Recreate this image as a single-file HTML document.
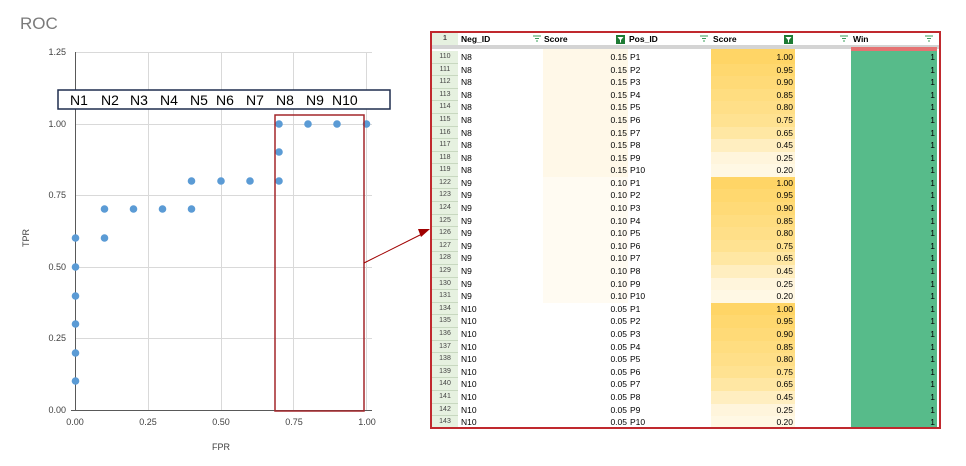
<!DOCTYPE html>
<html><head><meta charset="utf-8"><style>
*{margin:0;padding:0;box-sizing:border-box}
body{width:966px;height:466px;background:#fff;position:relative;overflow:hidden;font-family:"Liberation Sans",sans-serif}
.t{position:absolute;font-family:"Liberation Sans",sans-serif}
#tbl{position:absolute;left:430px;top:31px;width:511px;height:398px;border:2px solid #c0292e;background:#fff;overflow:hidden}
.hd{position:absolute;left:0;top:0;height:13px;width:100%;font-size:8.5px;font-weight:bold;color:#000}
.row{position:absolute;left:0;height:12.59px;width:100%;font-size:8.5px;color:#000;line-height:12.5px}
.c{position:absolute;top:0;height:100%;white-space:nowrap}
.rn{left:0;width:26px;background:#e6f1e0;color:#444;font-size:7px;text-align:center;border-bottom:1px solid #c8d8c0}
.neg{left:27px;width:83px;padding-left:2px}
.s1{left:111px;width:85px;text-align:right;padding-right:1px}
.pos{left:196px;width:82px;padding-left:2px}
.s2{left:279px;width:84px;text-align:right;padding-right:2px}
.win{left:419px;width:86px;background:#57bb8a;text-align:right;padding-right:2px}
.f{position:absolute;top:3px;width:8px;height:7px}
.fg{position:absolute;top:2px;width:9px;height:9px}
</style></head><body>
<div class="t" style="left:20px;top:14px;font-size:17px;color:#7a7a7a">ROC</div>
<svg width="430" height="466" style="position:absolute;left:0;top:0">
<g stroke="#d9d9d9" stroke-width="1">
<line x1="75" y1="52.5" x2="372" y2="52.5"/><line x1="75" y1="124.5" x2="372" y2="124.5"/><line x1="75" y1="195.5" x2="372" y2="195.5"/><line x1="75" y1="267.5" x2="372" y2="267.5"/><line x1="75" y1="338.5" x2="372" y2="338.5"/>
<line x1="148.5" y1="52" x2="148.5" y2="410"/><line x1="221.5" y1="52" x2="221.5" y2="410"/><line x1="293.5" y1="52" x2="293.5" y2="410"/><line x1="366.5" y1="52" x2="366.5" y2="410"/>
</g>
<line x1="75.5" y1="52" x2="75.5" y2="411" stroke="#595959"/>
<line x1="71" y1="410.5" x2="372" y2="410.5" stroke="#595959"/>
<g font-size="9" fill="#404040" font-family="Liberation Sans" text-anchor="end">
<text x="66" y="55">1.25</text><text x="66" y="127">1.00</text><text x="66" y="198">0.75</text><text x="66" y="270">0.50</text><text x="66" y="341">0.25</text><text x="66" y="413">0.00</text></g>
<g font-size="9" fill="#404040" font-family="Liberation Sans" text-anchor="middle">
<text x="75" y="425">0.00</text><text x="148" y="425">0.25</text><text x="221" y="425">0.50</text><text x="294" y="425">0.75</text><text x="367" y="425">1.00</text>
<text x="221" y="450">FPR</text>
<text x="0" y="0" transform="translate(29,238) rotate(-90)">TPR</text></g>
<g fill="#5b9bd5">
<circle cx="75.5" cy="381" r="3.8"/><circle cx="75.5" cy="353" r="3.8"/><circle cx="75.5" cy="324" r="3.8"/><circle cx="75.5" cy="296" r="3.8"/><circle cx="75.5" cy="267" r="3.8"/><circle cx="75.5" cy="238" r="3.8"/>
<circle cx="104.5" cy="238" r="3.8"/><circle cx="104.5" cy="209" r="3.8"/><circle cx="133.5" cy="209" r="3.8"/><circle cx="162.5" cy="209" r="3.8"/><circle cx="191.5" cy="209" r="3.8"/>
<circle cx="191.5" cy="181" r="3.8"/><circle cx="221" cy="181" r="3.8"/><circle cx="250" cy="181" r="3.8"/><circle cx="279" cy="181" r="3.8"/><circle cx="279" cy="152" r="3.8"/>
<circle cx="279" cy="124" r="3.8"/><circle cx="308" cy="124" r="3.8"/><circle cx="337" cy="124" r="3.8"/><circle cx="366.5" cy="124" r="3.8"/></g>
<rect x="58" y="90" width="332" height="19" fill="#fff" stroke="#1f2d4e" stroke-width="1.5"/>
<g font-size="14" fill="#000" font-family="Liberation Sans"><text x="70" y="105">N1</text><text x="101" y="105">N2</text><text x="130" y="105">N3</text><text x="160" y="105">N4</text><text x="190" y="105">N5</text><text x="216" y="105">N6</text><text x="246" y="105">N7</text><text x="276" y="105">N8</text><text x="306" y="105">N9</text><text x="332" y="105">N10</text></g>
<rect x="275" y="115" width="89" height="296" fill="none" stroke="#a3262a" stroke-width="1.5"/>
<line x1="364" y1="263" x2="422" y2="234" stroke="#a00000" stroke-width="1"/>
<polygon points="430,229 418,229 421,237" fill="#a00000"/>
</svg>
<div id="tbl">
<div class="hd">
<div class="c rn" style="height:13px;line-height:12px;border:0">1</div>
<div class="c neg" style="line-height:12px">Neg_ID</div>
<svg class="f" style="left:101px;top:2px" viewBox="0 0 8 7"><path d="M0 1h8M2 3.5h4M3 6h2" stroke="#3a9c5a" stroke-width="1"/></svg>
<div class="c" style="left:112px;line-height:12px">Score</div>
<svg class="fg" style="left:184px" viewBox="0 0 9 9"><rect width="9" height="9" fill="#1e7b34"/><path d="M1.5 2h6L5 5v2.5H4V5z" fill="#fff"/></svg>
<div class="c" style="left:197px;line-height:12px">Pos_ID</div>
<svg class="f" style="left:268px;top:2px" viewBox="0 0 8 7"><path d="M0 1h8M2 3.5h4M3 6h2" stroke="#3a9c5a" stroke-width="1"/></svg>
<div class="c" style="left:281px;line-height:12px">Score</div>
<svg class="fg" style="left:352px" viewBox="0 0 9 9"><rect width="9" height="9" fill="#1e7b34"/><path d="M1.5 2h6L5 5v2.5H4V5z" fill="#fff"/></svg>
<svg class="f" style="left:408px;top:2px" viewBox="0 0 8 7"><path d="M0 1h8M2 3.5h4M3 6h2" stroke="#3a9c5a" stroke-width="1"/></svg>
<div class="c" style="left:421px;line-height:12px">Win</div>
<svg class="f" style="left:493px;top:2px" viewBox="0 0 8 7"><path d="M0 1h8M2 3.5h4M3 6h2" stroke="#3a9c5a" stroke-width="1"/></svg>
</div>
<div style="position:absolute;left:0;top:12px;width:100%;height:4px;background:#d4d4d4"></div>
<div style="position:absolute;left:111px;top:16px;width:85px;height:2px;background:#fff8e8"></div>
<div style="position:absolute;left:279px;top:16px;width:84px;height:2px;background:#ffd566"></div>
<div style="position:absolute;left:419px;top:14px;width:86px;height:4px;background:#e57373"></div>
<div id="rows"></div>
</div>
<script>
var P=[["1.00","#ffd566"],["0.95","#ffd86f"],["0.90","#ffda77"],["0.85","#ffdd80"],["0.80","#ffdf88"],["0.75","#ffe291"],["0.65","#ffe7a3"],["0.45","#ffeec0"],["0.25","#fff5dc"],["0.20","#fff8e4"]];
var G=[["N8","0.15",110,"#fff8e8"],["N9","0.10",122,"#fffbf2"],["N10","0.05",134,"#ffffff"]];
var h="",i=0;
G.forEach(function(g){for(var k=0;k<10;k++){var top=18+i*12.59;
h+='<div class="row" style="top:'+top+'px"><div class="c rn">'+(g[2]+k)+'</div><div class="c neg">'+g[0]+'</div><div class="c s1" style="background:'+g[3]+'">'+g[1]+'</div><div class="c pos">P'+(k+1)+'</div><div class="c s2" style="background:'+P[k][1]+'">'+P[k][0]+'</div><div class="c win">1</div></div>';i++;}});
document.getElementById("rows").innerHTML=h;
</script>
</body></html>
